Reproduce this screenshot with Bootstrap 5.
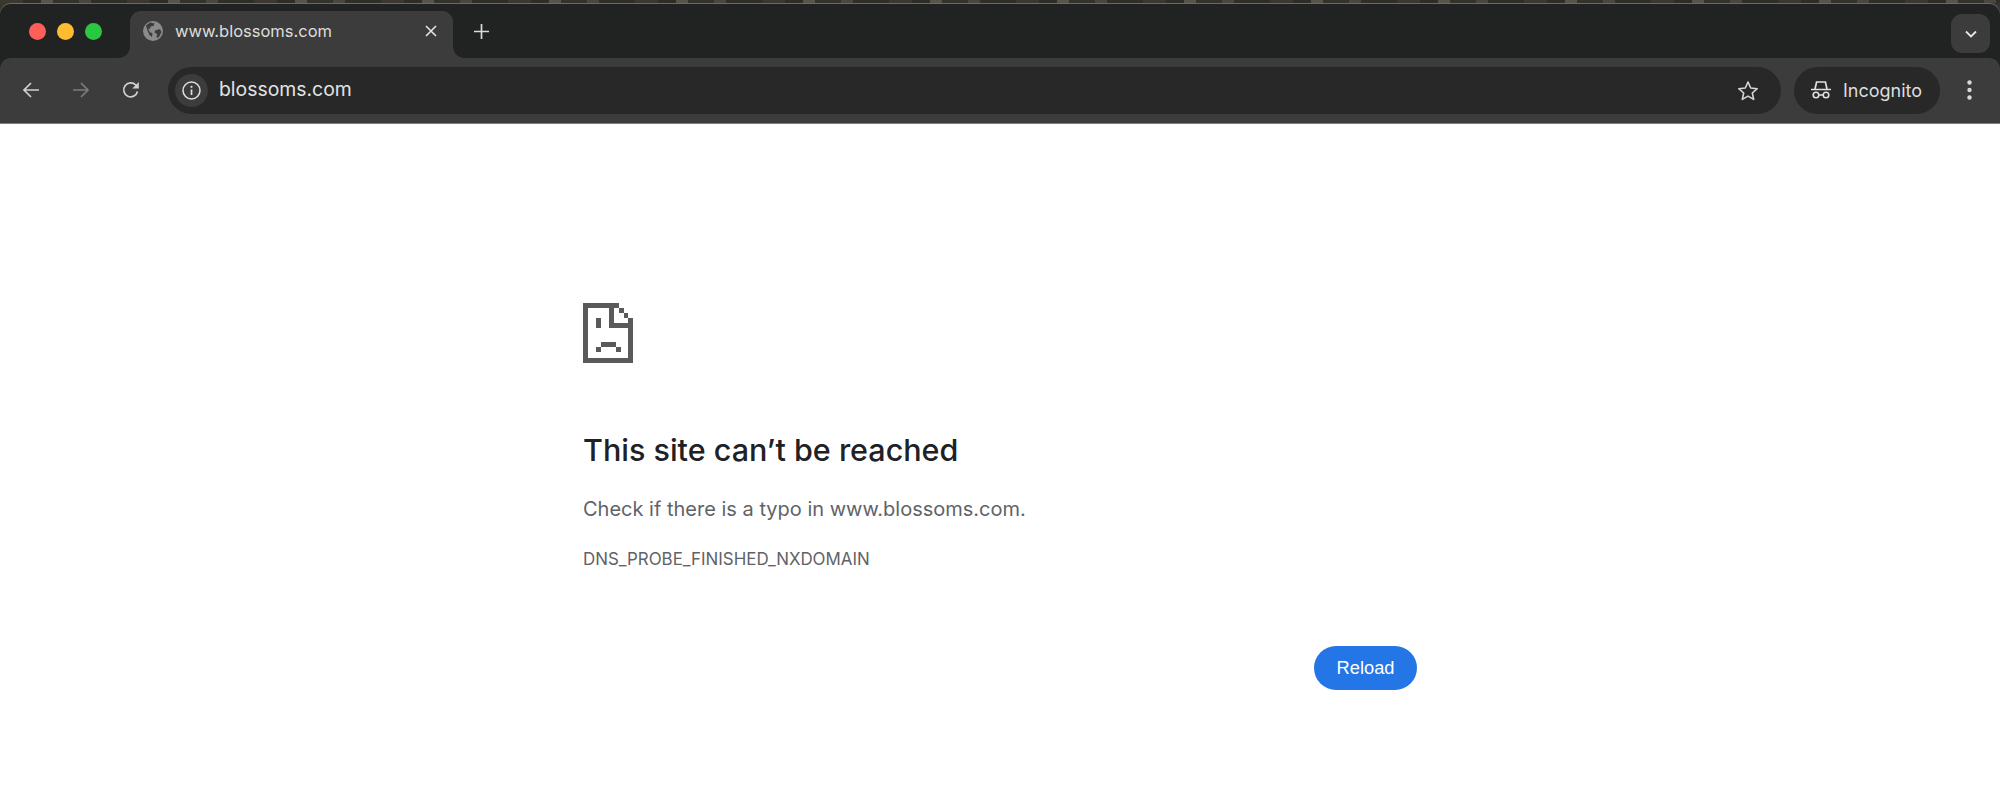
<!DOCTYPE html>
<html lang="en">
<head>
    <meta charset="UTF-8">
    <title>www.blossoms.com</title>
    <link href="https://cdn.jsdelivr.net/npm/bootstrap@5.3.0/dist/css/bootstrap.min.css" rel="stylesheet">
    <style>
        body {
            background: #fff;
            font-family: Inter, "Liberation Sans", sans-serif;
            height: 806px;
            overflow: hidden;
        }
        .desk-strip {
            height: 3px;
            background: repeating-linear-gradient(90deg, #3a382f 0 23px, #2e2d27 23px 41px, #57544a 41px 53px, #34332b 53px 79px, #4a483e 79px 91px, #2f2e27 91px 127px);
        }
        .chrome-wrap {
            background: #38362d;
        }
        .chrome-win {
            border-radius: 11px 11px 0 0;
            box-shadow: inset 0 1px 0 #6a6a6a;
            background: #202322;
            overflow: hidden;
        }
        .tab-strip {
            height: 55px;
            padding-top: 8px;
        }
        .traffic {
            width: 130px;
            padding: 12px 0 0 29px;
            gap: 11px;
            height: 47px;
        }
        .traffic span {
            width: 17px;
            height: 17px;
            border-radius: 50%;
        }
        .traffic .light-red {
            background: #ff5f57;
        }
        .traffic .light-amber {
            background: #febc2e;
        }
        .traffic .light-green {
            background: #28c840;
        }
        .tab-active {
            position: relative;
            width: 323px;
            height: 47px;
            background: #3c3c3c;
            border-radius: 11px 11px 0 0;
            padding: 0 16px 7px 13px;
            color: #dcdcdc;
            font-size: 16.5px;
        }
        .tab-active::before, .tab-active::after {
            content: "";
            position: absolute;
            bottom: 0;
            width: 11px;
            height: 11px;
        }
        .tab-active::before {
            left: -11px;
            background: radial-gradient(circle at 0 0, transparent 10.5px, #3c3c3c 11px);
        }
        .tab-active::after {
            right: -11px;
            background: radial-gradient(circle at 100% 0, transparent 10.5px, #3c3c3c 11px);
        }
        .tab-title {
            margin-left: 12px;
        }
        .new-tab {
            margin: 13px 0 0 21px;
        }
        .tab-menu {
            width: 39px;
            height: 39px;
            margin: 3px 10px 0 0;
            background: #3c3c3c;
            border-radius: 11px;
        }
        .tool-row {
            height: 66px;
            background: #3c3c3c;
            border-radius: 11px 11px 0 0;
            padding: 0 0 1px 22px;
            border-bottom: 1px solid #7d7d7d;
        }
        .nav-ico {
            width: 18px;
            height: 18px;
        }
        .nav-gap {
            margin-left: 32px;
        }
        .omni {
            height: 47px;
            width: 1613px;
            margin-left: 28px;
            background: #282828;
            border-radius: 24px;
            padding: 0 22px 0 7px;
            color: #e3e3e3;
            font-size: 19.4px;
        }
        .omni-info {
            width: 33px;
            height: 33px;
            border-radius: 50%;
            background: #3c3c3c;
            margin-right: 11px;
        }
        .incog-chip {
            height: 47px;
            width: 146px;
            margin-left: 13px;
            background: #282828;
            border-radius: 24px;
            padding-left: 17px;
            color: #dedede;
            font-size: 18px;
            gap: 12px;
        }
        .kebab {
            margin-left: 27px;
        }
        .err-page {
            width: 834px;
            margin: 0 auto;
            padding-top: 179px;
        }
        .err-icon {
            display: block;
            width: 50px;
            height: 60px;
        }
        .err-title {
            margin: 67px 0 0;
            font-size: 30.5px;
            line-height: 40px;
            font-weight: 500;
            color: #202124;
        }
        .err-text {
            margin: 24px 0 0;
            font-size: 20px;
            line-height: 30px;
            color: #5f6368;
        }
        .err-code {
            margin: 23px 0 0;
            font-size: 16.9px;
            line-height: 24px;
            color: #5f6368;
        }
        .btn.reload-btn {
            margin-top: 75px;
            width: 103px;
            height: 44px;
            padding: 0;
            background: #2475e5;
            border: 0;
            border-radius: 22px;
            color: #fff;
            font-family: "Liberation Sans", Arial, sans-serif;
            font-size: 18.3px;
        }
    </style>
</head>
<body>
    <div class="chrome-wrap">
        <div class="desk-strip"></div>
        <div class="chrome-win">
            <div class="tab-strip d-flex align-items-start">
                <div class="traffic d-flex">
                    <span class="light-red"></span>
                    <span class="light-amber"></span>
                    <span class="light-green"></span>
                </div>
                <div class="tab-active d-flex align-items-center">
                    <svg width="20" height="20" viewBox="0 0 20 20"><circle cx="10" cy="10" r="10" fill="#8b8b8b"/><path d="M3 4.500l4-3 4.500 1-1 2.500-3 .5-.5 2.500-2-.5 2 4 2.500 .5-.5 4-2.500-2-2-4.500zM12 9.500l5-1.500 1.500 3-2.500 5-2.500 1 .5-4-2.500-1.500z" fill="#3c3c3c"/></svg>
                    <span class="tab-title flex-grow-1">www.blossoms.com</span>
                    <svg width="12" height="12" viewBox="0 0 12 12"><path d="M1 1l10 10M11 1L1 11" stroke="#e4e4e4" stroke-width="1.600"/></svg>
                </div>
                <svg class="new-tab" width="15" height="15" viewBox="0 0 15 15"><path d="M7.500 0v15M0 7.500h15" stroke="#dcdcdc" stroke-width="1.700"/></svg>
                <div class="tab-menu ms-auto d-flex align-items-center justify-content-center">
                    <svg width="12" height="8" viewBox="0 0 12 8"><path d="M1 1.500l5 5 5-5" fill="none" stroke="#e4e4e4" stroke-width="1.800"/></svg>
                </div>
            </div>
            <div class="tool-row d-flex align-items-center">
                <svg class="nav-ico" viewBox="0 0 18 18"><path d="M17 9H2M9 2L2 9l7 7" fill="none" stroke="#d0d0d0" stroke-width="1.700"/></svg>
                <svg class="nav-ico nav-gap" viewBox="0 0 18 18"><path d="M1 9h15M9 2l7 7-7 7" fill="none" stroke="#7c7c7c" stroke-width="1.700"/></svg>
                <svg class="nav-ico nav-gap" viewBox="0 0 18 18"><path d="M15.500 10.500A7 7 0 1 1 13.800 4L16 6.300" fill="none" stroke="#d0d0d0" stroke-width="1.700"/><path d="M16.800 1v6.500h-6.500z" fill="#d0d0d0"/></svg>
                <div class="omni d-flex align-items-center">
                    <div class="omni-info d-flex align-items-center justify-content-center">
                        <svg width="19" height="19" viewBox="0 0 19 19"><circle cx="9.500" cy="9.500" r="8.500" fill="none" stroke="#dedede" stroke-width="1.500"/><path d="M9.500 8.500v5.500" stroke="#dedede" stroke-width="1.700"/><circle cx="9.500" cy="5.800" r="1.100" fill="#dedede"/></svg>
                    </div>
                    <span class="flex-grow-1">blossoms.com</span>
                    <svg width="22" height="21" viewBox="0 0 22 21"><path d="M11 2l2.700 6 6.500 .7-4.900 4.300 1.400 6.400L11 16.100 5.300 19.400l1.400-6.400-4.900-4.300 6.500-.7z" fill="none" stroke="#d6d6d6" stroke-width="1.600" stroke-linejoin="round"/></svg>
                </div>
                <div class="incog-chip d-flex align-items-center">
                    <svg width="20" height="18" viewBox="0 0 20 18"><path d="M0 8.500h20" stroke="#e0e0e0" stroke-width="1.700"/><path d="M4 8l1.600-7h8.800L16 8" fill="none" stroke="#e0e0e0" stroke-width="1.700"/><circle cx="5" cy="14" r="2.800" fill="none" stroke="#e0e0e0" stroke-width="1.600"/><circle cx="15" cy="14" r="2.800" fill="none" stroke="#e0e0e0" stroke-width="1.600"/><path d="M7.800 14h4.400" stroke="#e0e0e0" stroke-width="1.400"/></svg>
                    <span>Incognito</span>
                </div>
                <svg class="kebab" width="5" height="20" viewBox="0 0 5 20"><circle cx="2.500" cy="2.500" r="2.200" fill="#d8d8d8"/><circle cx="2.500" cy="10" r="2.200" fill="#d8d8d8"/><circle cx="2.500" cy="17.500" r="2.200" fill="#d8d8d8"/></svg>
            </div>
        </div>
    </div>

    <main class="err-page">
        <svg class="err-icon" viewBox="0 0 50 60" fill="#5a5a5a" shape-rendering="crispEdges">
            <rect x="0" y="0" width="36" height="5"/>
            <rect x="0" y="0" width="5" height="60"/>
            <rect x="0" y="55" width="50" height="5"/>
            <rect x="45" y="15" width="5" height="45"/>
            <rect x="26" y="5" width="5" height="20"/>
            <rect x="26" y="20" width="24" height="5"/>
            <rect x="36" y="5" width="5" height="5"/>
            <rect x="41" y="10" width="4" height="5"/>
            <rect x="13" y="15" width="5" height="10"/>
            <rect x="18" y="39" width="15" height="5"/>
            <rect x="13" y="44" width="5" height="5"/>
            <rect x="33" y="44" width="5" height="5"/>
        </svg>
        <h1 class="err-title">This site can’t be reached</h1>
        <p class="err-text">Check if there is a typo in www.blossoms.com.</p>
        <div class="err-code">DNS_PROBE_FINISHED_NXDOMAIN</div>
        <div class="d-flex justify-content-end">
            <button type="button" class="btn reload-btn">Reload</button>
        </div>
    </main>

    <script src="https://cdn.jsdelivr.net/npm/bootstrap@5.3.0/dist/js/bootstrap.bundle.min.js"></script>
</body>
</html>
